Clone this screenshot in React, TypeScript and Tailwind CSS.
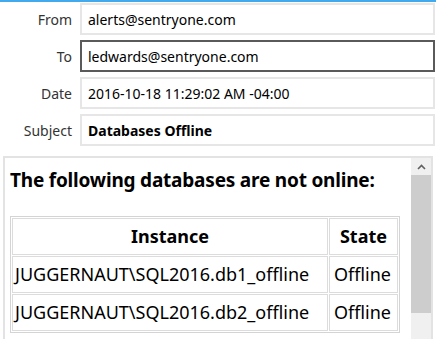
const fields = [
  { label: 'From', value: 'alerts@sentryone.com', focused: false, bold: false },
  { label: 'To', value: 'ledwards@sentryone.com', focused: true, bold: false },
  { label: 'Date', value: '2016-10-18 11:29:02 AM -04:00', focused: false, bold: false },
  { label: 'Subject', value: 'Databases Offline', focused: false, bold: true },
];

const rows = [
  { instance: 'JUGGERNAUT\\SQL2016.db1_offline', state: 'Offline' },
  { instance: 'JUGGERNAUT\\SQL2016.db2_offline', state: 'Offline' },
];

export default function App() {
  return (
    <div className="w-[436px] h-[339px] overflow-hidden bg-white text-black font-['Noto_Sans',sans-serif]">
      <div className="h-[2px] bg-[#41a9ee]" />

      {/* Header fields */}
      <div className="flex flex-col gap-[5px] pt-[1px] pr-[1px]">
        {fields.map((f) => (
          <div key={f.label} className="flex items-center h-[32px]">
            <div className="w-[72px] text-right text-[14px] text-[#333]">{f.label}</div>
            <div
              className={`ml-[8px] flex-1 h-full flex items-center px-[6px] text-[14px] border-2 ${
                f.focused ? 'border-[#5a5a5a]' : 'border-[#e6e6e6]'
              } ${f.bold ? 'font-bold' : ''}`}
            >
              {f.value}
            </div>
          </div>
        ))}
      </div>

      {/* Message body */}
      <div className="mt-[10px] ml-[3px] w-[430px] h-[200px] border-2 border-b-0 border-[#e3e3e3] flex">
        <div className="w-[406px] pl-[5px] pt-[9px]">
          <h1 className="text-[19px] font-bold leading-[26px] tracking-[-0.2px]">The following databases are not online:</h1>
          <table className="mt-[23px] border border-[#d4d4d4] border-separate border-spacing-[1px] text-[18px]">
            <thead>
              <tr>
                <th className="h-[37px] w-[316px] border border-[#dcdcdc] font-bold text-center">Instance</th>
                <th className="h-[37px] w-[69px] border border-[#dcdcdc] font-bold text-center">State</th>
              </tr>
            </thead>
            <tbody>
              {rows.map((r) => (
                <tr key={r.instance}>
                  <td className="h-[37px] border border-[#dcdcdc] px-[2px] whitespace-nowrap">{r.instance}</td>
                  <td className="h-[37px] border border-[#dcdcdc] px-[4px] whitespace-nowrap">{r.state}</td>
                </tr>
              ))}
            </tbody>
          </table>
        </div>
        <div className="w-[20px] bg-[#f0f0f0] flex flex-col">
          <div className="h-[17px] flex items-center justify-center">
            <svg width="9" height="6" viewBox="0 0 9 6">
              <path d="M1 5 L4.5 1.5 L8 5" fill="none" stroke="#606060" strokeWidth="1.6" />
            </svg>
          </div>
          <div className="h-[138px] bg-[#cdcdcd]" />
        </div>
      </div>
    </div>
  );
}
